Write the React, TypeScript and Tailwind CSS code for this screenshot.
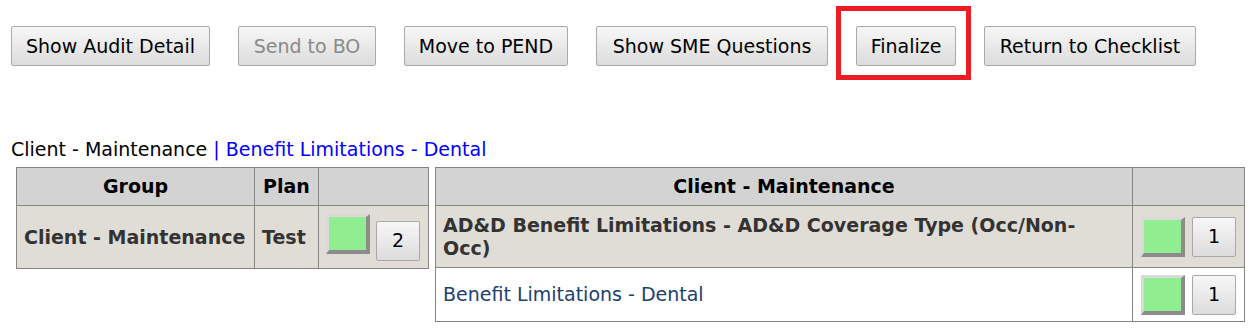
import React from 'react';

const btn =
  'h-[40px] rounded-[2px] border border-[#a9a9a9] bg-linear-to-b from-[#f7f7f7] to-[#dcdcdc] text-[19px] font-normal leading-none';

const actions = [
  { label: 'Show Audit Detail', w: 'w-[199px]' },
  { label: 'Send to BO', w: 'w-[138px]', disabled: true },
  { label: 'Move to PEND', w: 'w-[164px]' },
  { label: 'Show SME Questions', w: 'w-[232px]' },
  { label: 'Finalize', w: 'w-[100px]', marked: true },
  { label: 'Return to Checklist', w: 'w-[212px]' },
];

function StatusBox() {
  return (
    <span className="block h-[40px] w-[44px] shrink-0 border-t-[3px] border-l-[3px] border-r-4 border-b-4 border-t-[#dadada] border-l-[#dadada] border-r-[#8c8c8c] border-b-[#8c8c8c] bg-[#90ee90]" />
  );
}

function CountButton({ n, offset }: { n: number; offset?: boolean }) {
  return (
    <button className={`${btn} w-[44px] shrink-0 text-black ${offset ? 'mt-[7px]' : ''}`}>{n}</button>
  );
}

const cell = 'border border-[#858585] px-[7px]';

export default function App() {
  return (
    <div className="min-h-[334px] bg-white pl-[11px] pt-[26px] text-[19px] text-black [font-family:'DejaVu_Sans',Verdana,sans-serif]">
      <div className="flex gap-[28px]">
        {actions.map((a) => (
          <div key={a.label} className="relative">
            <button className={`${btn} ${a.w} ${a.disabled ? 'text-[#8a8a8a]' : 'text-black'}`}>{a.label}</button>
            {a.marked && (
              <div className="pointer-events-none absolute -top-[20px] -bottom-[14px] -left-[20px] -right-[15px] border-[5px] border-[#ed1c24]" />
            )}
          </div>
        ))}
      </div>

      <div className="mt-[72px] leading-[23px]">
        Client - Maintenance <span className="text-[#0000ff]">| Benefit Limitations - Dental</span>
      </div>

      <div className="mt-[6px] flex items-start">
        <table className="ml-[5px] table-fixed border-collapse">
          <thead>
            <tr className="h-[38px] bg-[#d3d3d3] font-bold">
              <th className={`${cell} w-[238px] text-center`}>Group</th>
              <th className={`${cell} w-[64px] text-center`}>Plan</th>
              <th className={`${cell} w-[110px]`}></th>
            </tr>
          </thead>
          <tbody>
            <tr className="h-[63px] bg-[#e0ddd6] font-bold text-[#333333]">
              <td className={cell}>Client - Maintenance</td>
              <td className={cell}>Test</td>
              <td className={cell}>
                <div className="flex items-start gap-[6px]">
                  <StatusBox />
                  <CountButton n={2} offset />
                </div>
              </td>
            </tr>
          </tbody>
        </table>

        <table className="ml-[6px] table-fixed border-collapse leading-[23px]">
          <thead>
            <tr className="h-[38px] bg-[#d3d3d3] font-bold">
              <th className={`${cell} w-[697px] text-center`}>Client - Maintenance</th>
              <th className={`${cell} w-[108px]`}></th>
            </tr>
          </thead>
          <tbody>
            <tr className="h-[62px] bg-[#e0ddd6]">
              <td className={`${cell} font-bold text-[#333333]`}>
                <div className="max-w-[660px]">
                  AD&amp;D Benefit Limitations - AD&amp;D Coverage Type (Occ/Non-Occ)
                </div>
              </td>
              <td className={`${cell} px-[8px]`}>
                <div className="flex gap-[7px]">
                  <StatusBox />
                  <CountButton n={1} />
                </div>
              </td>
            </tr>
            <tr className="h-[54px] bg-white">
              <td className={`${cell} text-[#22406f]`}>Benefit Limitations - Dental</td>
              <td className={`${cell} px-[8px]`}>
                <div className="flex gap-[7px]">
                  <StatusBox />
                  <CountButton n={1} />
                </div>
              </td>
            </tr>
          </tbody>
        </table>
      </div>
    </div>
  );
}
